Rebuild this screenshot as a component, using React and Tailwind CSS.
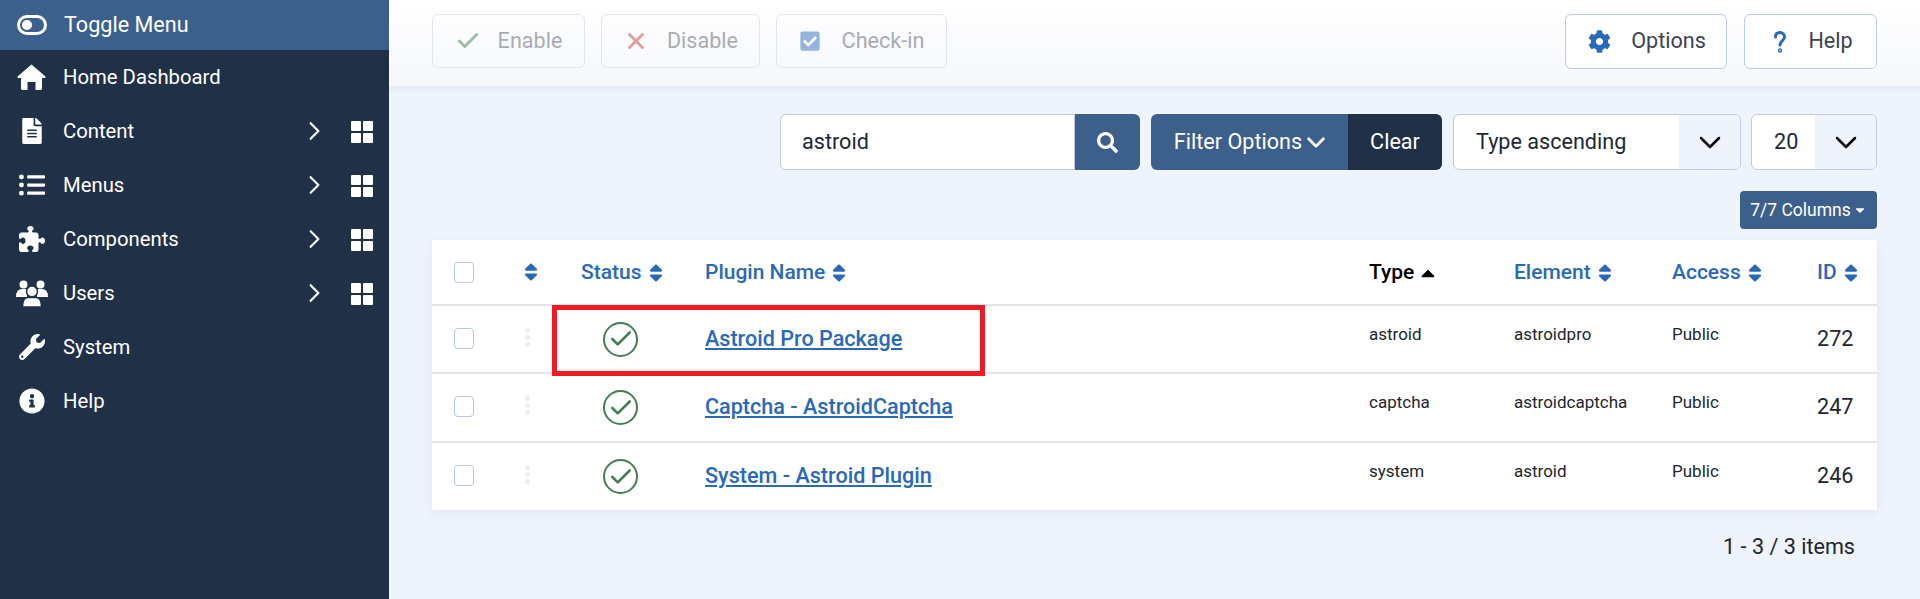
import { FaFileAlt, FaListUl, FaWrench, FaInfoCircle, FaSort, FaCaretUp, FaCog, FaCheckSquare, FaSearch, FaCaretDown } from 'react-icons/fa';
import { FaPuzzlePiece } from 'react-icons/fa6';
import { Check, X } from 'lucide-react';

function HomeIcon({ className }) {
  return (
    <svg viewBox="0 0 29 26" width="29" height="26" fill="currentColor" className={className}>
      <path d="M14.5 0.5 L28.5 12.5 Q29 14 27.5 14 L25 14 L25 24.5 Q25 26 23.5 26 L18.5 26 L18.5 18 L10.5 18 L10.5 26 L5.5 26 Q4 26 4 24.5 L4 14 L1.5 14 Q0 14 0.5 12.5 Z" />
    </svg>
  );
}

function UsersIcon({ className }) {
  return (
    <svg viewBox="0 0 32 27" width="32" height="27" fill="currentColor" className={className}>
      <circle cx="7.5" cy="4.5" r="4" />
      <circle cx="24.5" cy="4.5" r="4" />
      <path d="M0 17 Q0 9 6 9 L11 9 L11 17 Z" />
      <path d="M32 17 Q32 9 26 9 L21 9 L21 17 Z" />
      <circle cx="16" cy="11.5" r="5.5" stroke="#203047" strokeWidth="1.5" />
      <path d="M6.5 27 Q6.5 17.5 12 17.5 L20 17.5 Q25.5 17.5 25.5 27 Z" stroke="#203047" strokeWidth="1.5" />
    </svg>
  );
}

const menu = [
  { icon: HomeIcon, label: 'Home Dashboard' },
  { icon: FaFileAlt, label: 'Content', sub: true },
  { icon: FaListUl, label: 'Menus', sub: true },
  { icon: FaPuzzlePiece, label: 'Components', sub: true },
  { icon: UsersIcon, label: 'Users', sub: true },
  { icon: FaWrench, label: 'System' },
  { icon: FaInfoCircle, label: 'Help' },
];

const rows = [
  { name: 'Astroid Pro Package', type: 'astroid', element: 'astroidpro', id: 272, height: 'h-[68px]' },
  { name: 'Captcha - AstroidCaptcha', type: 'captcha', element: 'astroidcaptcha', id: 247, height: 'h-[69px]' },
  { name: 'System - Astroid Plugin', type: 'system', element: 'astroid', id: 246, height: 'h-[68px]' },
];

function Chevron({ className = '', strokeWidth = 2.5 }) {
  return (
    <svg viewBox="0 0 22 13" fill="none" stroke="currentColor" strokeWidth={strokeWidth} strokeLinecap="round" strokeLinejoin="round" className={className}>
      <polyline points="2,2 11,11 20,2" />
    </svg>
  );
}

function GridIcon() {
  return (
    <svg viewBox="0 0 22 22" width="22" height="22" fill="currentColor" className="mr-[16px] mt-[2px]">
      <rect width="10" height="10" rx="1" />
      <rect x="12" width="10" height="10" rx="1" />
      <rect y="12" width="10" height="10" rx="1" />
      <rect x="12" y="12" width="10" height="10" rx="1" />
    </svg>
  );
}

function SortHead({ label, className = '' }) {
  return (
    <th className={`text-left text-[21px] font-medium text-[#2a69b8] ${className}`}>
      <span className="inline-flex items-center gap-[3px] pt-[1px]">
        {label}
        <FaSort className="text-[22px]" />
      </span>
    </th>
  );
}

function Box({ className = '' }) {
  return <span className={`block h-[21px] w-[20px] rounded-[4px] border border-[#b5c6e0] bg-white ${className}`} />;
}

export default function App() {
  return (
    <div className="flex h-[599px] overflow-hidden bg-[#eff3fb] font-['Roboto',sans-serif]">
      <aside className="w-[389px] shrink-0 bg-[#203047] text-white">
        <div className="flex h-[50px] items-center bg-[#3d5f8c] pl-[17px] text-[21.6px]">
          <svg viewBox="0 0 30 20" width="30" height="20" className="mr-[17px]" fill="none">
            <rect x="1.5" y="1.5" width="27" height="17" rx="8.5" stroke="white" strokeWidth="3" />
            <circle cx="10" cy="10" r="5" fill="white" />
          </svg>
          Toggle Menu
        </div>
        {menu.map(({ icon: Icon, label, sub }) => (
          <div key={label} className="flex h-[54px] items-center text-[20.3px]">
            <span className="flex w-[63px] justify-center">
              <Icon className="text-[26px]" />
            </span>
            <span className="flex-1">{label}</span>
            {sub && (
              <>
                <Chevron className="mr-[27px] h-[12px] w-[19px] -rotate-90" />
                <GridIcon />
              </>
            )}
          </div>
        ))}
      </aside>

      <main className="min-w-0 flex-1">
        <div className="flex h-[86px] items-start justify-between bg-gradient-to-b from-white to-[#f5f7fb] px-[43px] pt-[14px] shadow-[0_2px_6px_rgba(30,50,90,0.08)]">
          <div className="flex gap-[16px] text-[21.6px] text-[#a9acb3]">
            <button className="flex h-[54px] w-[153px] items-center justify-center gap-[17px] rounded-[6px] border border-[#e1e5ee]">
              <Check size={26} strokeWidth={2.6} className="text-[#9cbba4]" />
              Enable
            </button>
            <button className="flex h-[54px] w-[159px] items-center justify-center gap-[18px] rounded-[6px] border border-[#e1e5ee]">
              <X size={26} strokeWidth={2.6} className="text-[#e29a9a]" />
              Disable
            </button>
            <button className="flex h-[54px] w-[171px] items-center justify-center gap-[21px] rounded-[6px] border border-[#e1e5ee]">
              <FaCheckSquare className="text-[22px] text-[#94b4de]" />
              Check-in
            </button>
          </div>
          <div className="flex gap-[17px] text-[21.6px] text-[#3d4450]">
            <button className="flex h-[55px] w-[162px] items-center justify-center gap-[20px] rounded-[6px] border border-[#bccbe0] bg-white pl-[2px]">
              <FaCog className="text-[23px] text-[#2a69b8]" />
              Options
            </button>
            <button className="flex h-[55px] w-[133px] items-center justify-center gap-[21px] rounded-[6px] border border-[#bccbe0] bg-white pl-[5px]">
              <svg viewBox="0 0 14 24" width="14" height="24" fill="none" stroke="#2a69b8" strokeWidth="3" strokeLinecap="round">
                <path d="M2.5 7c0-3 2-4.5 4.5-4.5s4.5 1.8 4.5 4.5c0 3.4-4.5 4-4.5 8" />
                <circle cx="7" cy="20.5" r="0.7" />
              </svg>
              Help
            </button>
          </div>
        </div>

        <div className="flex justify-end pr-[43px] pt-[28px] text-[21.6px]">
          <div className="flex h-[56px] w-[295px] items-center rounded-l-[6px] border border-[#bccbe0] bg-white pl-[21px] text-[#1c2738]">astroid</div>
          <div className="flex h-[56px] w-[65px] items-center justify-center rounded-r-[6px] bg-[#3d5f8c] text-white">
            <FaSearch className="text-[21px]" />
          </div>
          <div className="ml-[11px] flex h-[56px] w-[197px] items-center justify-center gap-[5px] rounded-l-[6px] bg-[#3d5f8c] text-white">
            Filter Options
            <Chevron strokeWidth={3.4} className="h-[11px] w-[18px]" />
          </div>
          <div className="flex h-[56px] w-[94px] items-center justify-center rounded-r-[6px] bg-[#203047] text-white">Clear</div>
          <div className="ml-[11px] flex h-[56px] w-[288px] overflow-hidden rounded-[6px] border border-[#bccbe0] bg-white text-[#1c2738]">
            <div className="flex flex-1 items-center pl-[22px]">Type ascending</div>
            <div className="flex w-[61px] items-center justify-center bg-[#eff3fb] text-black">
              <Chevron className="h-[13px] w-[22px]" />
            </div>
          </div>
          <div className="ml-[10px] flex h-[56px] w-[126px] overflow-hidden rounded-[6px] border border-[#bccbe0] bg-white text-[#1c2738]">
            <div className="flex flex-1 items-center pl-[22px]">20</div>
            <div className="flex w-[61px] items-center justify-center bg-[#eff3fb] text-black">
              <Chevron className="h-[13px] w-[22px]" />
            </div>
          </div>
        </div>

        <div className="flex justify-end pr-[43px] pt-[21px]">
          <div className="flex h-[38px] w-[137px] items-center justify-center gap-[2px] rounded-[4px] bg-[#3d5f8c] text-[17.5px] text-white">
            7/7 Columns
            <FaCaretDown className="text-[14px]" />
          </div>
        </div>

        <div className="relative mx-[43px] mt-[11px] bg-white shadow-[0_4px_12px_rgba(30,50,90,0.06)]">
          <table className="w-full table-fixed border-collapse">
            <thead>
              <tr className="h-[65px] border-b-2 border-[#e3e5ea]">
                <th className="w-[90px] pl-[22px]"><Box /></th>
                <th className="w-[59px] text-left text-[#2a69b8]"><FaSort className="ml-[-2px] text-[22px]" /></th>
                <SortHead label="Status" className="w-[124px]" />
                <SortHead label="Plugin Name" />
                <th className="w-[145px] text-left text-[21px] font-medium text-black">
                  <span className="inline-flex items-center gap-[3px] pt-[1px]">
                    Type
                    <FaCaretUp className="text-[22px]" />
                  </span>
                </th>
                <SortHead label="Element" className="w-[158px]" />
                <SortHead label="Access" className="w-[145px]" />
                <SortHead label="ID" className="w-[60px]" />
              </tr>
            </thead>
            <tbody>
              {rows.map((row, i) => (
                <tr key={row.id} className={`${row.height} ${i < rows.length - 1 ? 'border-b-2 border-[#e3e5ea]' : ''}`}>
                  <td className="pl-[22px]"><Box className="mb-[2px]" /></td>
                  <td>
                    <span className="mb-[4px] ml-[3px] flex w-[5px] flex-col gap-[2px]">
                      <i className="h-[5px] w-[5px] rounded-full bg-[#edeef0]" />
                      <i className="h-[5px] w-[5px] rounded-full bg-[#edeef0]" />
                      <i className="h-[5px] w-[5px] rounded-full bg-[#edeef0]" />
                    </span>
                  </td>
                  <td>
                    <span className="ml-[22px] flex h-[35px] w-[35px] items-center justify-center rounded-full border-2 border-[#457d54] text-[#457d54]">
                      <Check size={26} strokeWidth={2.4} />
                    </span>
                  </td>
                  <td>
                    <a className="text-[21.6px] font-medium text-[#2a69b8] underline">{row.name}</a>
                  </td>
                  <td className="pb-[9px] text-[17px] text-[#22262d]">{row.type}</td>
                  <td className="pb-[9px] text-[17px] text-[#22262d]">{row.element}</td>
                  <td className="pb-[9px] text-[17px] text-[#22262d]">Public</td>
                  <td className="text-[21.6px] text-[#22262d]">{row.id}</td>
                </tr>
              ))}
            </tbody>
          </table>
          <div className="absolute left-[120px] top-[65px] h-[71px] w-[433px] border-[5px] border-[#ed1c24]" />
        </div>

        <div className="mr-[43px] pr-[22px] pt-[21px] text-right text-[21.6px] text-[#22262d]">1 - 3 / 3 items</div>
      </main>
    </div>
  );
}
